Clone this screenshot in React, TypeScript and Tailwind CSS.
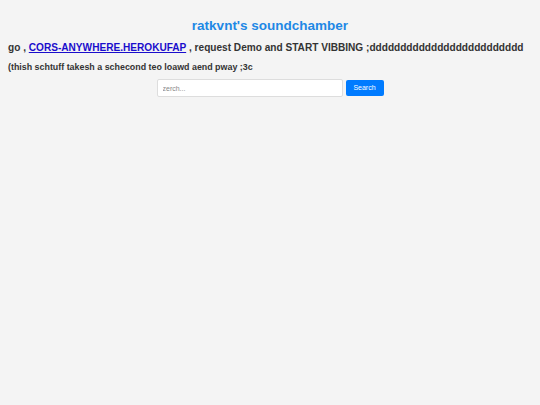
export default function App() {
  return (
    <div className="min-h-[405px] bg-[#f4f4f4] px-2 pt-[18px] font-['Liberation_Sans',Arial,sans-serif]">
      <h1 className="text-center text-[13.5px] font-bold text-[#1e88e5] leading-[16px]">
        ratkvnt's soundchamber
      </h1>
      <h2 className="mt-[7px] text-[10.1px] font-bold text-[#333] leading-[14px] whitespace-nowrap">
        go ,{" "}
        <a href="#" className="text-[#1a0dcc] underline">
          CORS-ANYWHERE.HEROKUFAP
        </a>{" "}
        , request Demo and START VIBBING ;ddddddddddddddddddddddddd
      </h2>
      <p className="mt-[7px] text-[8.9px] font-bold text-[#333] leading-[10px]">
        (thish schtuff takesh a schecond teo loawd aend pway ;3c
      </p>
      <div className="mt-[7px] flex justify-center gap-[3px]">
        <input
          type="text"
          placeholder="zerch..."
          className="w-[186px] h-[18px] rounded-[2px] border border-[#ddd] bg-white px-[5px] text-[7px] outline-none placeholder:text-[#888]"
        />
        <button className="h-[16px] mt-[1px] w-[38px] rounded-[2px] bg-[#007bff] text-[7px] text-white">
          Search
        </button>
      </div>
    </div>
  );
}
